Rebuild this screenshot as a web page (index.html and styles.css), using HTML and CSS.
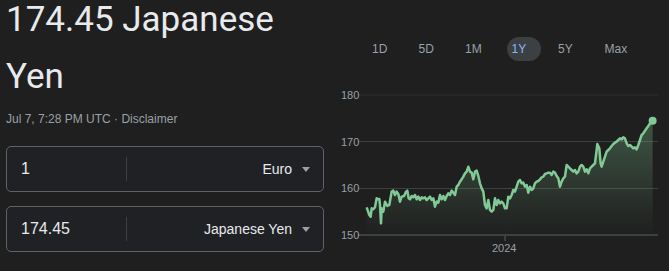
FILE: index.html
```html
<!DOCTYPE html>
<html lang="en">
<head>
    <meta charset="UTF-8">
    <title>EUR to JPY</title>
    <link rel="stylesheet" href="styles.css">
</head>
<body>
<div class="page">
    <div class="converter">
        <h1 class="rate">174.45 Japanese<br>Yen</h1>
        <div class="meta">Jul 7, 7:28 PM UTC · <span class="disclaimer">Disclaimer</span></div>
        <div class="field">
            <span class="amount">1</span>
            <span class="divider"></span>
            <span class="currency">Euro</span>
            <span class="caret"></span>
        </div>
        <div class="field">
            <span class="amount">174.45</span>
            <span class="divider"></span>
            <span class="currency">Japanese Yen</span>
            <span class="caret"></span>
        </div>
    </div>
    <div class="history">
        <ul class="tabs">
            <li>1D</li>
            <li>5D</li>
            <li>1M</li>
            <li class="active">1Y</li>
            <li>5Y</li>
            <li>Max</li>
        </ul>
        <svg class="chart" width="339" height="191" viewBox="330 80 339 191">
            <defs>
                <linearGradient id="area" x1="0" y1="0" x2="0" y2="1">
                    <stop offset="0" stop-color="#81c995" stop-opacity=".32"/>
                    <stop offset="1" stop-color="#81c995" stop-opacity="0"/>
                </linearGradient>
            </defs>
            <line class="grid" x1="358" y1="95" x2="658" y2="95"/>
            <line class="grid" x1="358" y1="141.5" x2="658" y2="141.5"/>
            <line class="grid" x1="358" y1="188.5" x2="658" y2="188.5"/>
            <line class="axis" x1="358" y1="235" x2="658" y2="235"/>
            <line class="axis" x1="505" y1="235" x2="505" y2="241"/>
            <text class="label" x="341" y="99">180</text>
            <text class="label" x="341" y="146">170</text>
            <text class="label" x="341" y="192">160</text>
            <text class="label" x="341" y="239">150</text>
            <text class="label" x="492" y="252">2024</text>
            <g transform="translate(330 120) scale(.3333)">
                <polygon class="area" points="110,345 110,262 118,285 122,290 125,265 130,268 135,262 140,235 145,238 148,237 150,255 153,310 155,265 160,275 165,245 172,258 178,255 185,215 190,212 195,225 200,215 205,222 210,245 215,230 222,228 228,215 232,212 236,235 240,238 245,228 250,232 255,225 260,238 265,230 270,240 275,232 280,235 285,232 290,240 295,235 300,230 305,240 310,235 315,260 320,245 325,248 330,225 335,238 340,228 345,240 350,228 355,220 360,225 365,212 370,218 375,225 380,200 385,195 390,185 395,178 400,170 405,160 410,155 415,140 420,155 425,158 430,178 435,155 440,152 445,168 450,190 455,205 460,215 465,255 470,265 475,240 480,270 485,275 490,270 495,235 500,255 505,240 510,250 515,245 520,250 525,265 530,265 535,230 540,235 545,225 550,210 555,215 560,200 565,185 570,180 575,190 580,188 585,200 590,195 595,218 600,200 605,210 610,205 615,190 620,185 625,183 630,178 635,172 640,170 645,162 650,160 655,158 660,158 665,165 670,155 675,158 680,168 685,175 690,200 695,185 700,175 705,170 710,135 715,140 720,145 725,150 730,155 735,150 740,160 745,155 750,140 755,135 760,140 765,155 770,148 775,160 780,145 785,140 790,135 795,130 800,90 802,72 808,85 812,130 815,140 820,125 825,110 830,95 835,90 840,85 845,78 850,72 855,68 860,65 865,60 870,55 875,58 880,52 885,55 890,70 895,78 900,75 905,80 910,85 915,82 920,88 925,75 930,60 935,45 940,40 945,32 950,25 955,18 960,10 965,5 968,2 968,345"/>
                <polyline class="line" points="110,262 118,285 122,290 125,265 130,268 135,262 140,235 145,238 148,237 150,255 153,310 155,265 160,275 165,245 172,258 178,255 185,215 190,212 195,225 200,215 205,222 210,245 215,230 222,228 228,215 232,212 236,235 240,238 245,228 250,232 255,225 260,238 265,230 270,240 275,232 280,235 285,232 290,240 295,235 300,230 305,240 310,235 315,260 320,245 325,248 330,225 335,238 340,228 345,240 350,228 355,220 360,225 365,212 370,218 375,225 380,200 385,195 390,185 395,178 400,170 405,160 410,155 415,140 420,155 425,158 430,178 435,155 440,152 445,168 450,190 455,205 460,215 465,255 470,265 475,240 480,270 485,275 490,270 495,235 500,255 505,240 510,250 515,245 520,250 525,265 530,265 535,230 540,235 545,225 550,210 555,215 560,200 565,185 570,180 575,190 580,188 585,200 590,195 595,218 600,200 605,210 610,205 615,190 620,185 625,183 630,178 635,172 640,170 645,162 650,160 655,158 660,158 665,165 670,155 675,158 680,168 685,175 690,200 695,185 700,175 705,170 710,135 715,140 720,145 725,150 730,155 735,150 740,160 745,155 750,140 755,135 760,140 765,155 770,148 775,160 780,145 785,140 790,135 795,130 800,90 802,72 808,85 812,130 815,140 820,125 825,110 830,95 835,90 840,85 845,78 850,72 855,68 860,65 865,60 870,55 875,58 880,52 885,55 890,70 895,78 900,75 905,80 910,85 915,82 920,88 925,75 930,60 935,45 940,40 945,32 950,25 955,18 960,10 965,5 968,2"/>
                <circle class="dot" cx="968" cy="2" r="12"/>
            </g>
        </svg>
    </div>
</div>
</body>
</html>
```

FILE: styles.css
```css
* {
    margin: 0;
    padding: 0;
    list-style: none;
    box-sizing: border-box;
}
html, body {
    height: 100%;
}
body {
    background: #1f1f1f;
    color: #e8eaed;
    font-family: "Liberation Sans", Arial, sans-serif;
    overflow: hidden;
}
.page {
    display: flex;
}
.converter {
    width: 330px;
    padding-left: 6px;
}
.rate {
    margin-top: -9px;
    font-family: Roboto, "Liberation Sans", sans-serif;
    font-size: 35px;
    font-weight: 400;
    line-height: 57px;
    color: #e8eaed;
}
.meta {
    margin-top: 6px;
    font-size: 12px;
    line-height: 16px;
    color: #9aa0a6;
}
.field {
    width: 318px;
    height: 46px;
    margin-top: 14px;
    display: flex;
    align-items: center;
    padding: 0 13px 0 14px;
    border: 1px solid #5f6368;
    border-radius: 5px;
    background: #202124;
}
.meta + .field {
    margin-top: 19px;
}
.amount {
    width: 105px;
    font-size: 16px;
    color: #e8eaed;
}
.divider {
    width: 1px;
    height: 24px;
    background: #3c4043;
}
.currency {
    flex: 1;
    text-align: right;
    font-size: 14px;
    color: #e8eaed;
}
.caret {
    margin-left: 10px;
    border-left: 4.5px solid transparent;
    border-right: 4.5px solid transparent;
    border-top: 5px solid #9aa0a6;
}
.history {
    width: 339px;
    padding-top: 37px;
}
.tabs {
    display: flex;
    gap: 12.5px;
    margin-left: 37px;
}
.tabs li {
    width: 34px;
    height: 24px;
    line-height: 24px;
    padding-left: 5px;
    border-radius: 12px;
    font-size: 12px;
    color: #9aa0a6;
}
.tabs li.active {
    background: #3c4043;
    color: #8ab4f8;
}
.chart {
    display: block;
    margin-top: 19px;
}
.grid {
    stroke: #3c4043;
    stroke-width: 1;
}
.grid:first-of-type {
    stroke: #303134;
}
.axis {
    stroke: #3c4043;
    stroke-width: 2;
}
.label {
    font-family: "Liberation Sans", Arial, sans-serif;
    font-size: 11px;
    fill: #9aa0a6;
}
.area {
    fill: url(#area);
}
.line {
    fill: none;
    stroke: #81c995;
    stroke-width: 7.5;
    stroke-linejoin: round;
}
.dot {
    fill: #81c995;
}
```
